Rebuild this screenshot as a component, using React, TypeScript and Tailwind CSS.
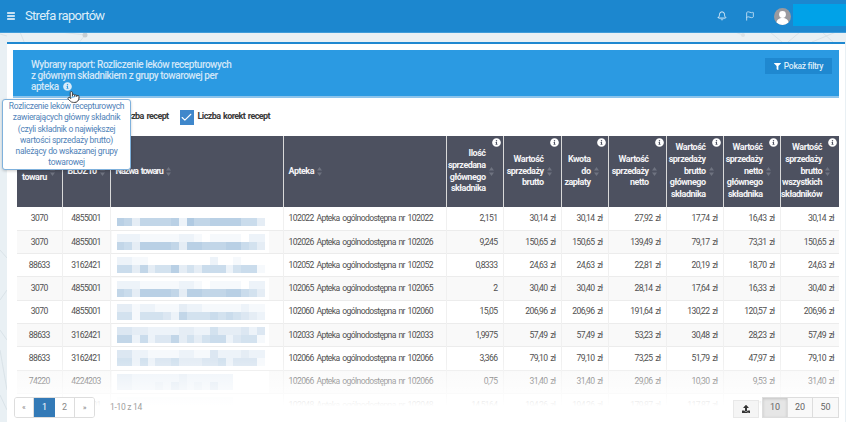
import React from "react";
import { Bell, Flag, Menu, Pointer, Check } from "lucide-react";
import { FaInfoCircle, FaFilter, FaUpload } from "react-icons/fa";

const cols = [45, 48, 173, 163, 57, 58, 47, 58, 57, 57, 59];

const rows = [
  ["3070", "4855001", "102022 Apteka ogólnodostępna nr 102022", "2,151", "30,14 zł", "30,14 zł", "27,92 zł", "17,74 zł", "16,43 zł", "30,14 zł"],
  ["3070", "4855001", "102026 Apteka ogólnodostępna nr 102026", "9,245", "150,65 zł", "150,65 zł", "139,49 zł", "79,17 zł", "73,31 zł", "150,65 zł"],
  ["88633", "3162421", "102052 Apteka ogólnodostępna nr 102052", "0,8333", "24,63 zł", "24,63 zł", "22,81 zł", "20,19 zł", "18,70 zł", "24,63 zł"],
  ["3070", "4855001", "102065 Apteka ogólnodostępna nr 102065", "2", "30,40 zł", "30,40 zł", "28,14 zł", "17,64 zł", "16,33 zł", "30,40 zł"],
  ["3070", "4855001", "102060 Apteka ogólnodostępna nr 102060", "15,05", "206,96 zł", "206,96 zł", "191,64 zł", "130,22 zł", "120,57 zł", "206,96 zł"],
  ["88633", "3162421", "102033 Apteka ogólnodostępna nr 102033", "1,9975", "57,49 zł", "57,49 zł", "53,23 zł", "30,48 zł", "28,23 zł", "57,49 zł"],
  ["88633", "3162421", "102066 Apteka ogólnodostępna nr 102066", "3,366", "79,10 zł", "79,10 zł", "73,25 zł", "51,79 zł", "47,97 zł", "79,10 zł"],
  ["74220", "4224203", "102066 Apteka ogólnodostępna nr 102066", "0,75", "31,40 zł", "31,40 zł", "29,06 zł", "10,30 zł", "9,53 zł", "31,40 zł"],
  ["3070", "4855001", "102048 Apteka ogólnodostępna nr 102048", "14,5164", "194,26 zł", "194,26 zł", "179,87 zł", "117,87 zł", "109,14 zł", "194,26 zł"],
];

const mosaics = [
  ["0000000000000000000", "8737777829778888663"],
  ["2221111122101111022", "7638888738877788653"],
  ["2211000000002001000", "6637355835366625661"],
  ["2221111122101111022", "7638888738877788653"],
  ["3312211132211111211", "5515554275556565432"],
  ["4433222233225333424", "7726244735356624551"],
  ["4422111122114222322", "5525244533344524441"],
  ["3322222232222220000", "3322232432324220000"],
  ["1111111111111110000", "1111111111111110000"],
];

function shade(d: number) {
  const t = d / 9;
  const mix = (a: number, b: number) => Math.round(a + (b - a) * t);
  return `rgb(${mix(255, 176)},${mix(255, 202)},${mix(255, 226)})`;
}

function Mosaic({ data }: { data: string[] }) {
  return (
    <div className="bg-white ml-[1px] w-[157px] pl-[5px] py-[3px]">
      <div className="flex flex-col blur-[0.6px]">
        {data.map((line, i) => (
          <div key={i} className="flex h-[8px]">
            {line.split("").map((c, j) => (
              <span key={j} className="w-[7.8px] shrink-0" style={{ backgroundColor: shade(Number(c)) }} />
            ))}
          </div>
        ))}
      </div>
    </div>
  );
}

function Sort() {
  return (
    <svg viewBox="0 0 5 9" className="w-[5px] h-[9px] shrink-0" fill="#6f7380">
      <path d="M2.500 0 5 3.500H0z" />
      <path d="M2.500 9 0 5.500h5z" />
    </svg>
  );
}

function Head({ lines, info, left, tight }: { lines: string[]; info?: boolean; left?: boolean; tight?: boolean }) {
  return (
    <th className="relative p-0 bg-[#4d5160] border-r border-[#d9d9d9] last:border-r-0 font-bold">
      {info && <FaInfoCircle className="absolute top-[2px] right-[2px] text-white w-[9px] h-[9px]" />}
      <div className={`flex items-center gap-[3px] px-[5px] ${left ? "justify-start" : "justify-end pr-[9px]"}`}>
        <div
          className={`leading-[11.9px] text-[9px] ${tight ? "tracking-[-0.95px] [word-spacing:1.5px]" : "tracking-[-0.5px]"} text-[#f4f4f6] ${
            left ? "text-left" : "text-right"
          }`}
        >
          {lines.map((l) => (
            <div key={l}>{l}</div>
          ))}
        </div>
        <Sort />
      </div>
    </th>
  );
}

function Check2({ label }: { label: string }) {
  return (
    <div className="flex items-center gap-[4px]">
      <span className="w-[14px] h-[15px] bg-[#3f87cb] flex items-center justify-center">
        <Check className="w-[13px] h-[13px] text-white" strokeWidth={2} />
      </span>
      <span className="text-[9px] tracking-[-0.6px] [word-spacing:1px] font-bold text-[#3a3a3a]">{label}</span>
    </div>
  );
}

function PageBtn({ children, active, cls }: { children: React.ReactNode; active?: boolean; cls?: string }) {
  return (
    <span
      className={`flex items-center justify-center h-full ${cls ?? ""} ${
        active ? "bg-[#337ab7] text-white" : "bg-white text-[#8a8a8a]"
      }`}
    >
      {children}
    </span>
  );
}

const td = "p-0 text-[8.6px] tracking-[-0.62px] [word-spacing:1.2px] text-[#505050] border-r border-[#f0f0f0]";

export default function App() {
  return (
    <div
      className="relative w-[846px] h-[422px] overflow-hidden bg-[#e9f0f4] flex flex-col"
      style={{ fontFamily: "Roboto, 'Liberation Sans', sans-serif" }}
    >
      <svg className="absolute inset-0 w-full h-full" viewBox="0 0 846 422" fill="none" stroke="#d3dde3" strokeWidth="0.7">
        <path d="M20 32 25 44M85 35 78 44M85 35 60 32M85 35 88 32M0 34 7 36" />
        <circle cx="85" cy="35" r="2.500" fill="#c6ced3" stroke="none" />
        <path d="M743 35 735 32M770 32 782 42M800 32 788 42M812 42 836 32M833 42 822 32" />
        <circle cx="743" cy="35" r="2" fill="#dbe2e6" stroke="none" />
        <path d="M0 250 7 258M0 300 7 290M0 330 7 340M0 350 7 390M0 395 7 410" />
      </svg>

      <header className="relative h-[33px] shrink-0 bg-[#1c87cf] border-b border-[#3f9cda] flex items-center text-white">
        <Menu className="ml-[6px] w-[10px] h-[10px]" strokeWidth={3.5} />
        <span className="ml-[9px] text-[13px] tracking-[-0.7px] text-[#dcedf9]">Strefa raportów</span>
        <div className="ml-auto flex items-center h-full">
          <Bell className="w-[10px] h-[10px] mr-[18px]" strokeWidth={2} />
          <Flag className="w-[10px] h-[10px] mr-[19px] text-[#cfe6f7]" strokeWidth={2} />
          <span className="w-[17px] h-[17px] rounded-full bg-[#9a9a9f] overflow-hidden mr-[2px] flex items-center justify-center">
            <svg viewBox="0 0 17 17" className="w-[17px] h-[17px]" fill="white">
              <circle cx="8.500" cy="6.500" r="3.400" />
              <path d="M2.500 15c0-3.400 2.600-5 6-5s6 1.600 6 5l-2 2h-8z" />
            </svg>
          </span>
          <span className="w-[53px] h-[22px] mb-[2px] bg-[#00a2e8]" />
        </div>
      </header>

      <div className="relative mt-[9px] ml-[7px] mr-[1px] flex-1 min-h-0 bg-white border-t-2 border-[#1f88d0] pt-[6px] px-[6px]">
        <section className="h-[48px] bg-[#2b9ae2] border-b-[2px] border-[#8cc4ec] flex justify-between pl-[18px] pr-[7px] pt-[9px]">
          <h1 className="text-[10px] tracking-[-0.45px] leading-[11px] font-medium text-[#d2e7f8]">
            Wybrany raport: Rozliczenie leków recepturowych
            <br />z głównym składnikiem z grupy towarowej per
            <br />apteka
            <FaInfoCircle className="inline ml-[4px] w-[9px] h-[9px] align-[-1px] text-[#d9ebf9]" />
          </h1>
          <button className="-mt-[1px] h-[16px] w-[67px] bg-[#1f88d0] flex items-center justify-center gap-[3px] text-[#dcedf9] text-[8.5px] tracking-[-0.3px] font-medium">
            <FaFilter className="w-[7px] h-[7px] text-white" />
            Pokaż filtry
          </button>
        </section>

        <div className="h-[38px] flex items-center gap-[11px] pl-[90px]">
          <Check2 label="Liczba recept" />
          <Check2 label="Liczba korekt recept" />
        </div>

        <div className="ml-[4px]">
          <table className="table-fixed border-collapse w-[822px]">
            <colgroup>
              {cols.map((w, i) => (
                <col key={i} style={{ width: w }} />
              ))}
            </colgroup>
            <thead>
              <tr className="h-[71px]">
                <Head lines={["Kod", "towaru"]} left />
                <Head lines={["BLOZ10"]} left />
                <Head lines={["Nazwa towaru"]} left tight />
                <Head lines={["Apteka"]} left />
                <Head lines={["Ilość", "sprzedana", "głównego", "składnika"]} info />
                <Head lines={["Wartość", "sprzedaży", "brutto"]} info />
                <Head lines={["Kwota", "do", "zapłaty"]} info />
                <Head lines={["Wartość", "sprzedaży", "netto"]} info />
                <Head lines={["Wartość", "sprzedaży", "brutto", "głównego", "składnika"]} info />
                <Head lines={["Wartość", "sprzedaży", "netto", "głównego", "składnika"]} info />
                <Head lines={["Wartość", "sprzedaży", "brutto", "wszystkich", "składników"]} info />
              </tr>
            </thead>
            <tbody>
              {rows.map((r, i) => (
                <tr key={i} className={`h-[23.3px] border-b border-[#ececec] ${i % 2 ? "bg-[#f9f9f9]" : "bg-white"}`}>
                  <td className={`${td} text-center`}>{r[0]}</td>
                  <td className={`${td} text-center`}>{r[1]}</td>
                  <td className="p-0 border-r border-[#f0f0f0]">
                    <Mosaic data={mosaics[i]} />
                  </td>
                  <td className={`${td} pl-[5px] text-left whitespace-nowrap`}>{r[2]}</td>
                  {r.slice(3).map((v, j) => (
                    <td key={j} className={`${td} pr-[5px] text-right last:border-r-0`}>
                      {v}
                    </td>
                  ))}
                </tr>
              ))}
            </tbody>
          </table>
        </div>

        <div className="absolute left-0 right-0 bottom-0 h-[62px] bg-gradient-to-b from-transparent to-white to-[75%]" />

        <div className="absolute left-[7px] right-[6px] bottom-[4px] h-[21px] flex items-center text-[9px]">
          <div className="flex h-[21px] border border-[#dddddd] rounded-[3px] overflow-hidden">
            <PageBtn cls="w-[19px] border-r border-[#dddddd] text-[8px]">«</PageBtn>
            <PageBtn cls="w-[21px]" active>1</PageBtn>
            <PageBtn cls="w-[20px] border-r border-[#dddddd]">2</PageBtn>
            <PageBtn cls="w-[19px] text-[8px]">»</PageBtn>
          </div>
          <span className="ml-[15px] text-[8.5px] tracking-[-0.3px] text-[#a0a0a0]">1-10 z 14</span>
          <div className="ml-auto flex items-end h-full">
            <span className="w-[26px] h-[18px] mr-[3px] bg-[#f5f5f5] border border-[#e8e8e8] flex items-center justify-center">
              <FaUpload className="w-[8px] h-[8px] text-[#333]" />
            </span>
            <div className="flex h-[21px] border border-[#dddddd] text-[#666] text-[9px]">
              <span className="w-[25px] bg-[#e6e6e6] shadow-[inset_0_1px_3px_rgba(0,0,0,0.15)] flex items-center justify-center border-r border-[#dddddd]">10</span>
              <span className="w-[25px] bg-[#f9f9f9] flex items-center justify-center border-r border-[#dddddd]">20</span>
              <span className="w-[25px] bg-[#f9f9f9] flex items-center justify-center">50</span>
            </div>
          </div>
        </div>
      </div>

      <div className="absolute left-[2px] top-[99px] w-[129px] h-[71px] bg-white border border-[#7fb1dc] rounded-[3px] shadow-[0_1px_3px_rgba(0,0,0,0.2)] text-center text-[8.5px] tracking-[-0.3px] leading-[11.3px] text-[#4f82b8] pt-[1px]">
        Rozliczenie leków recepturowych
        <br />zawierających główny składnik
        <br />(czyli składnik o największej
        <br />wartości sprzedaży brutto)
        <br />należący do wskazanej grupy
        <br />towarowej
      </div>
      <Pointer className="absolute left-[67px] top-[90px] w-[13px] h-[14px] text-[#222] fill-white" strokeWidth={1.5} />
    </div>
  );
}
